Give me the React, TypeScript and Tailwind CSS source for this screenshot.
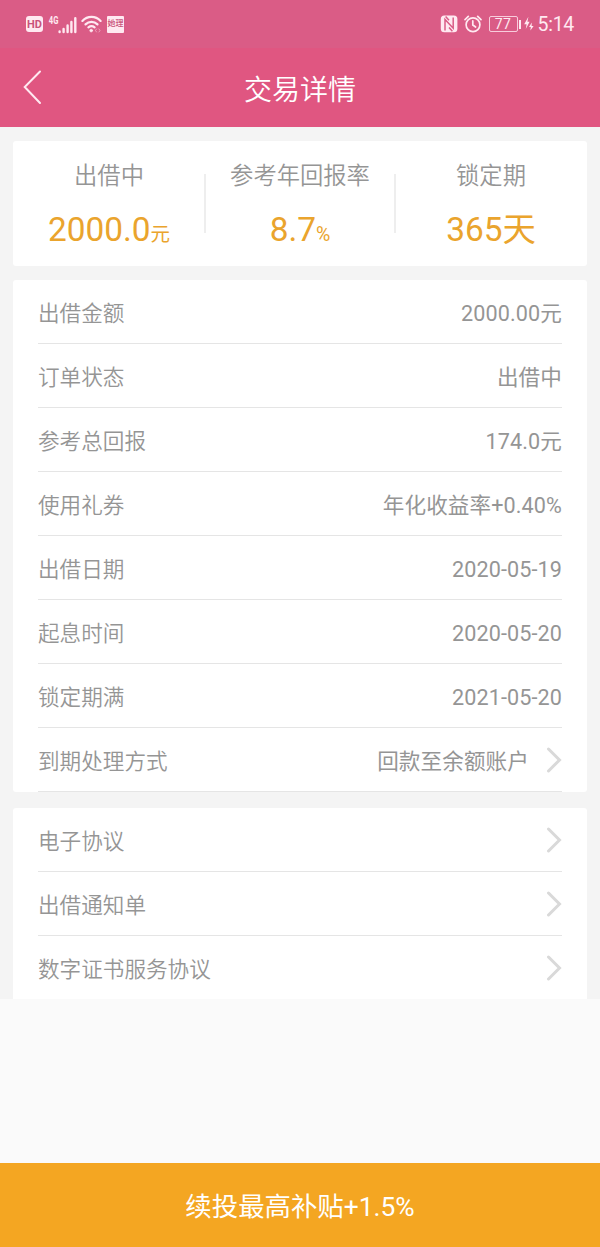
import React from "react";

const summary = [
  { label: "出借中", value: "2000.0", unit: "元", width: "w-[192px]" },
  { label: "参考年回报率", value: "8.7", unit: "%", width: "w-[190px]" },
  { label: "锁定期", value: "365天", unit: "", width: "w-[192px]" },
];

const details = [
  { label: "出借金额", value: "2000.00元" },
  { label: "订单状态", value: "出借中" },
  { label: "参考总回报", value: "174.0元" },
  { label: "使用礼券", value: "年化收益率+0.40%" },
  { label: "出借日期", value: "2020-05-19" },
  { label: "起息时间", value: "2020-05-20" },
  { label: "锁定期满", value: "2021-05-20" },
  { label: "到期处理方式", value: "回款至余额账户", arrow: true },
];

const agreements = ["电子协议", "出借通知单", "数字证书服务协议"];

const Arrow = () => (
  <svg
    width="16"
    height="26"
    viewBox="0 0 16 26"
    fill="none"
    stroke="#d9d9d9"
    strokeWidth="3"
    strokeLinecap="round"
    className="-mt-[5px] shrink-0"
  >
    <path d="M2.5 2 L13.5 13 L2.5 24" />
  </svg>
);

const StatusBar = () => {
  return (
    <div className="flex h-[48px] items-center bg-[#da5c86] pl-[26px] pr-[26px] font-normal text-[#ffe9f1]">
      <div className="flex h-[16px] w-[17px] items-center justify-center rounded-[3px] bg-[#ffe9f1] text-[11px] font-bold leading-none text-[#c9527a]">
        HD
      </div>
      <svg width="29" height="19" viewBox="0 0 29 19" className="ml-[5px]">
        <text
          x="0.8"
          y="9.4"
          fontSize="11"
          fontWeight="700"
          textLength="9.6"
          lengthAdjust="spacingAndGlyphs"
          fill="currentColor"
        >
          4G
        </text>
        <g stroke="currentColor" strokeWidth="2.4" strokeLinecap="round">
          <path d="M11.6 16.4V17M15.6 14V17M19.6 10.5V17M23.4 7V17M27.3 3.2V17" />
        </g>
      </svg>
      <svg
        width="21"
        height="18"
        viewBox="0 0 21 18"
        fill="none"
        stroke="currentColor"
        strokeWidth="2.2"
        strokeLinecap="round"
        className="ml-[4px]"
      >
        <path d="M1.4 5.9C6.5 0.5 14.5 0.5 19.6 5.9" />
        <path d="M4.5 9.4C8 6 13 6 16.5 9.4" />
        <path d="M7.4 12.4C9.2 11 11.8 11 13.6 12.4" />
        <circle cx="10.2" cy="15.6" r="1.4" fill="currentColor" strokeWidth="0.6" />
        <path d="M15.5 14L14.5 15.5L15.5 17M18 14L19 15.5L18 17" strokeWidth="0.8" opacity="0.6" />
      </svg>
      <div className="ml-[5px] flex h-[17px] w-[17px] items-center justify-center whitespace-nowrap rounded-[1px] bg-[#ffe9f1] text-[8px] font-medium leading-none text-[#c9527a]">
        她理
      </div>

      <svg width="18" height="18" viewBox="0 0 18 18" className="ml-auto">
        <rect x="0.8" y="0.6" width="16.6" height="16.6" rx="3.5" fill="currentColor" />
        <g fill="none" stroke="#da5c86" strokeWidth="1.5">
          <path d="M5 15.4V4.4L13.2 13.2V2.4" />
          <path d="M5.6 1.6L9 5.2M9 12.6L12.4 16.2" />
        </g>
      </svg>
      <svg
        width="18"
        height="18"
        viewBox="0 0 18 18"
        fill="none"
        stroke="currentColor"
        strokeWidth="1.7"
        strokeLinecap="round"
        className="ml-[6px]"
      >
        <circle cx="9" cy="9.8" r="6.9" />
        <path d="M8.8 5.9V10L11.6 12" />
        <path d="M1 4.6L4.3 1.4M17 4.6L13.7 1.4" />
      </svg>
      <div className="ml-[7px] flex h-[16px] w-[29px] items-center justify-center rounded-[2px] border border-[#ffe9f1]/80 text-[14px] leading-none tracking-[0.4px]">
        77
      </div>
      <div className="ml-px h-[9px] w-[2px] bg-[#ffe9f1]" />
      <svg width="10" height="16" viewBox="0 0 10 16" fill="currentColor" className="ml-[3px]">
        <path d="M4.4 0.8L0.2 8.2H2.6L1.8 13L5.6 5.8H3.4Z" />
        <path d="M7.8 6.6L5 11H6.8L6.4 14.6L9.6 10H7.6Z" />
      </svg>
      <span className="ml-[4px] mt-0.5 text-[19.5px] leading-none tracking-[-0.3px]">5:14</span>
    </div>
  );
};

const App = () => {
  return (
    <div className="flex h-[1247px] w-[600px] flex-col bg-[#fafafa] font-['Roboto','Noto_Sans_CJK_SC',sans-serif] font-[350] text-[#959595]">
      <StatusBar />
      <header className="flex h-[79px] items-center bg-[#e05681] text-white">
        <svg
          width="20"
          height="36"
          viewBox="0 0 20 36"
          fill="none"
          stroke="#ffe9f1"
          strokeWidth="2"
          strokeLinecap="round"
          className="ml-[23px] -mt-px"
        >
          <path d="M17 2.5L1.7 18L17 34" />
        </svg>
        <h1 className="mr-[43px] flex-1 pt-[6px] text-center text-[28px] leading-[40px]">
          交易详情
        </h1>
      </header>

      <main className="flex h-[872px] flex-col bg-[#f4f4f4] px-[13px] pt-[14px]">
        <section className="flex h-[126px] items-center rounded-[3px] bg-white">
          {summary.map((item, i) => (
            <React.Fragment key={item.label}>
              {i > 0 && <div className="-mx-px h-[59px] w-[2px] bg-[#eeeeee]" />}
              <div className={`${item.width} flex h-full flex-col items-center pt-[18px]`}>
                <span className="text-[23.3px] leading-[34px]">{item.label}</span>
                <div className="mt-[13px] whitespace-nowrap text-[33.4px] font-normal leading-[48px] text-[#eaa42d]">
                  {item.value}
                  {item.unit && <span className="text-[19.5px]">{item.unit}</span>}
                </div>
              </div>
            </React.Fragment>
          ))}
        </section>

        <section className="mt-[14px] rounded-[3px] bg-white px-[25px]">
          {details.map((row) => (
            <div
              key={row.label}
              className="flex h-[64px] items-center justify-between border-b border-[#e5e5e5] pt-[5px] text-[21.6px] leading-[32px]"
            >
              <span>{row.label}</span>
              <div className="flex items-center">
                <span className="font-normal tracking-[0.1px]">{row.value}</span>
                {row.arrow && (
                  <div className="ml-[17px]">
                    <Arrow />
                  </div>
                )}
              </div>
            </div>
          ))}
        </section>

        <section className="mt-[16px] flex-1 rounded-t-[3px] bg-white px-[25px]">
          {agreements.map((name) => (
            <div
              key={name}
              className="flex h-[64px] items-center justify-between border-b border-[#e5e5e5] pt-[5px] text-[21.6px] leading-[32px] last:h-[63px] last:border-b-0"
            >
              <span>{name}</span>
              <Arrow />
            </div>
          ))}
        </section>
      </main>

      <button className="mt-auto h-[84px] bg-[#f4a622] pt-[3px] text-[26.4px] font-normal leading-[40px] text-white">
        续投最高补贴+1.5%
      </button>
    </div>
  );
};

export default App;
